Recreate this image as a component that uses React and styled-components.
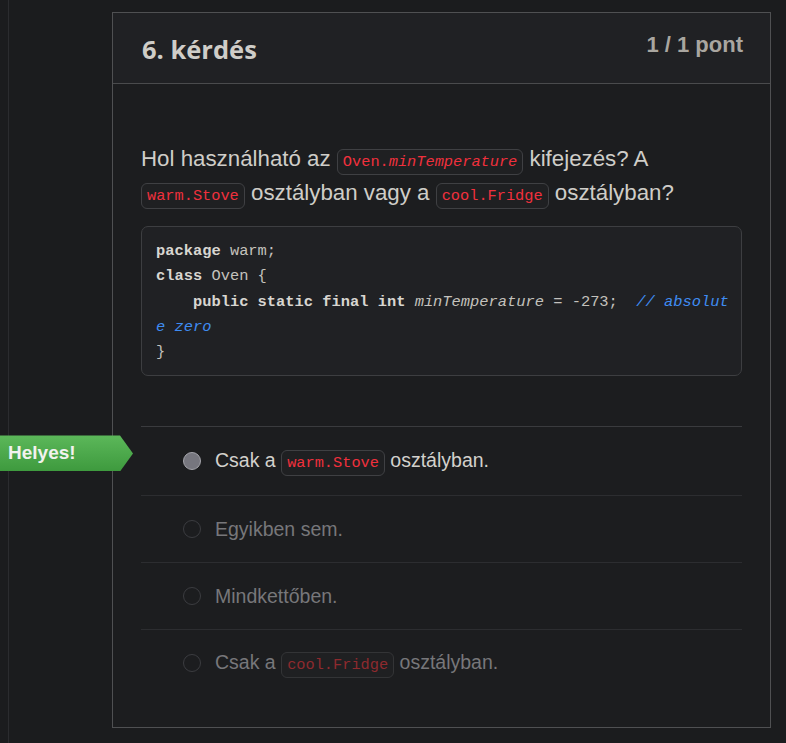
import React from "react";
import styled, { createGlobalStyle } from "styled-components";

const GlobalStyle = createGlobalStyle`
  html, body {
    margin: 0;
    padding: 0;
    background: #1b1c1e;
  }
  body {
    font-family: "Liberation Sans", Arial, sans-serif;
  }
`;

const answers = [
  { id: 1, before: "Csak a", code: "warm.Stove", after: "osztályban.", chosen: true },
  { id: 2, before: "Egyikben sem." },
  { id: 3, before: "Mindkettőben." },
  { id: 4, before: "Csak a", code: "cool.Fridge", after: "osztályban." }
];

const App = () => {
  return (
    <Page>
      <GlobalStyle />
      <Rail />
      <Main>
        <Card>
          <Header>
            <Title>6. kérdés</Title>
            <Points>1 / 1 pont</Points>
          </Header>
          <Body>
            <Question>
              Hol használható az{" "}
              <InlineCode>
                Oven.<em>minTemperature</em>
              </InlineCode>{" "}
              kifejezés? A <InlineCode>warm.Stove</InlineCode> osztályban vagy a{" "}
              <InlineCode>cool.Fridge</InlineCode> osztályban?
            </Question>
            {/* the block wraps "absolute" mid-word, as the source page does */}
            <CodeBlock>
              <Kw>package</Kw> warm;{"\n"}
              <Kw>class</Kw> Oven {"{"}
              {"\n"}
              {"    "}
              <Kw>public static final int</Kw> <Ident>minTemperature</Ident> = -273;{"  "}
              <Comment>{"// absolut\ne zero"}</Comment>
              {"\n"}
              {"}"}
            </CodeBlock>
            <AnswerList>
              {answers.map((a) => (
                <Answer key={a.id}>
                  {a.chosen && <Badge>Helyes!</Badge>}
                  <Radio $chosen={a.chosen} />
                  <AnswerText $chosen={a.chosen}>
                    {a.before}
                    {a.code && (
                      <>
                        {" "}
                        <InlineCode $dim={!a.chosen}>{a.code}</InlineCode>{" "}
                        {a.after}
                      </>
                    )}
                  </AnswerText>
                </Answer>
              ))}
            </AnswerList>
          </Body>
        </Card>
      </Main>
    </Page>
  );
};

export default App;

const Page = styled.div`
  display: flex;
  min-height: 743px;
  background: #1b1c1e;
`;

const Rail = styled.div`
  width: 8px;
  flex-shrink: 0;
  border-right: 1px solid #2b2c2f;
`;

const Main = styled.div`
  padding: 12px 0 0 103px;
`;

const Card = styled.div`
  width: 659px;
  height: 716px;
  border: 1px solid #4f5052;
  box-sizing: border-box;
  background: #1c1d1f;
`;

const Header = styled.div`
  display: flex;
  justify-content: space-between;
  align-items: flex-start;
  height: 70px;
  padding: 0 27px 0 29px;
  background: #202124;
  border-bottom: 1px solid #4a4b4d;
  box-sizing: content-box;
`;

const Title = styled.h2`
  margin: 19px 0 0;
  font-family: "Open Sans", sans-serif;
  font-size: 25.5px;
  font-weight: 700;
  color: #cfcdc8;
`;

const Points = styled.div`
  margin-top: 19px;
  font-size: 22px;
  font-weight: 700;
  color: #a9a6a0;
`;

const Body = styled.div`
  padding: 58px 28px 0 28px;
`;

const Question = styled.p`
  margin: 0;
  font-size: 22.3px;
  line-height: 34px;
  color: #cfcdc8;
`;

const InlineCode = styled.code`
  font-family: "Liberation Mono", monospace;
  font-size: 15.3px;
  line-height: 20px;
  padding: 3px 5px;
  border: 1px solid ${(p) => (p.$dim ? "#333436" : "#3f4043")};
  border-radius: 6px;
  background: #1f2022;
  color: ${(p) => (p.$dim ? "#8e2a2e" : "#f0303d")};
  em {
    font-style: italic;
  }
`;

const CodeBlock = styled.pre`
  margin: 16px 0 0;
  padding: 12px 14px 10px;
  border: 1px solid #3d3e41;
  border-radius: 7px;
  background: #202124;
  font-family: "Liberation Mono", monospace;
  font-size: 15.4px;
  line-height: 25.3px;
  color: #c4c2bd;
  white-space: pre;
  overflow: hidden;
`;

const Kw = styled.span`
  font-weight: 700;
  color: #d8d6d1;
`;

const Ident = styled.span`
  font-style: italic;
`;

const Comment = styled.span`
  font-style: italic;
  color: #3f8cf2;
`;

const AnswerList = styled.div`
  margin-top: 50px;
`;

const Answer = styled.div`
  position: relative;
  display: flex;
  align-items: center;
  gap: 14px;
  min-height: 66px;
  padding-left: 42px;
  border-top: 1px solid #2c2d30;
  &:first-child {
    border-top-color: #3a3b3e;
    min-height: 68px;
  }
`;

const Radio = styled.span`
  width: 16px;
  height: 16px;
  flex-shrink: 0;
  border-radius: 50%;
  border: 1px solid ${(p) => (p.$chosen ? "#a4a4aa" : "#3b3c40")};
  background: ${(p) => (p.$chosen ? "#76767e" : "transparent")};
`;

const AnswerText = styled.span`
  font-size: 19.5px;
  color: ${(p) => (p.$chosen ? "#d3d1cc" : "#77777a")};
`;

const Badge = styled.div`
  position: absolute;
  left: -141px;
  top: 8px;
  width: 125px;
  height: 36px;
  padding-left: 8px;
  display: flex;
  align-items: center;
  font-size: 19px;
  font-weight: 700;
  color: #f2f2ee;
  background: linear-gradient(#5cb85a, #3e9a3e);
  clip-path: polygon(0 0, 120px 0, 133px 50%, 120px 100%, 0 100%);
`;
